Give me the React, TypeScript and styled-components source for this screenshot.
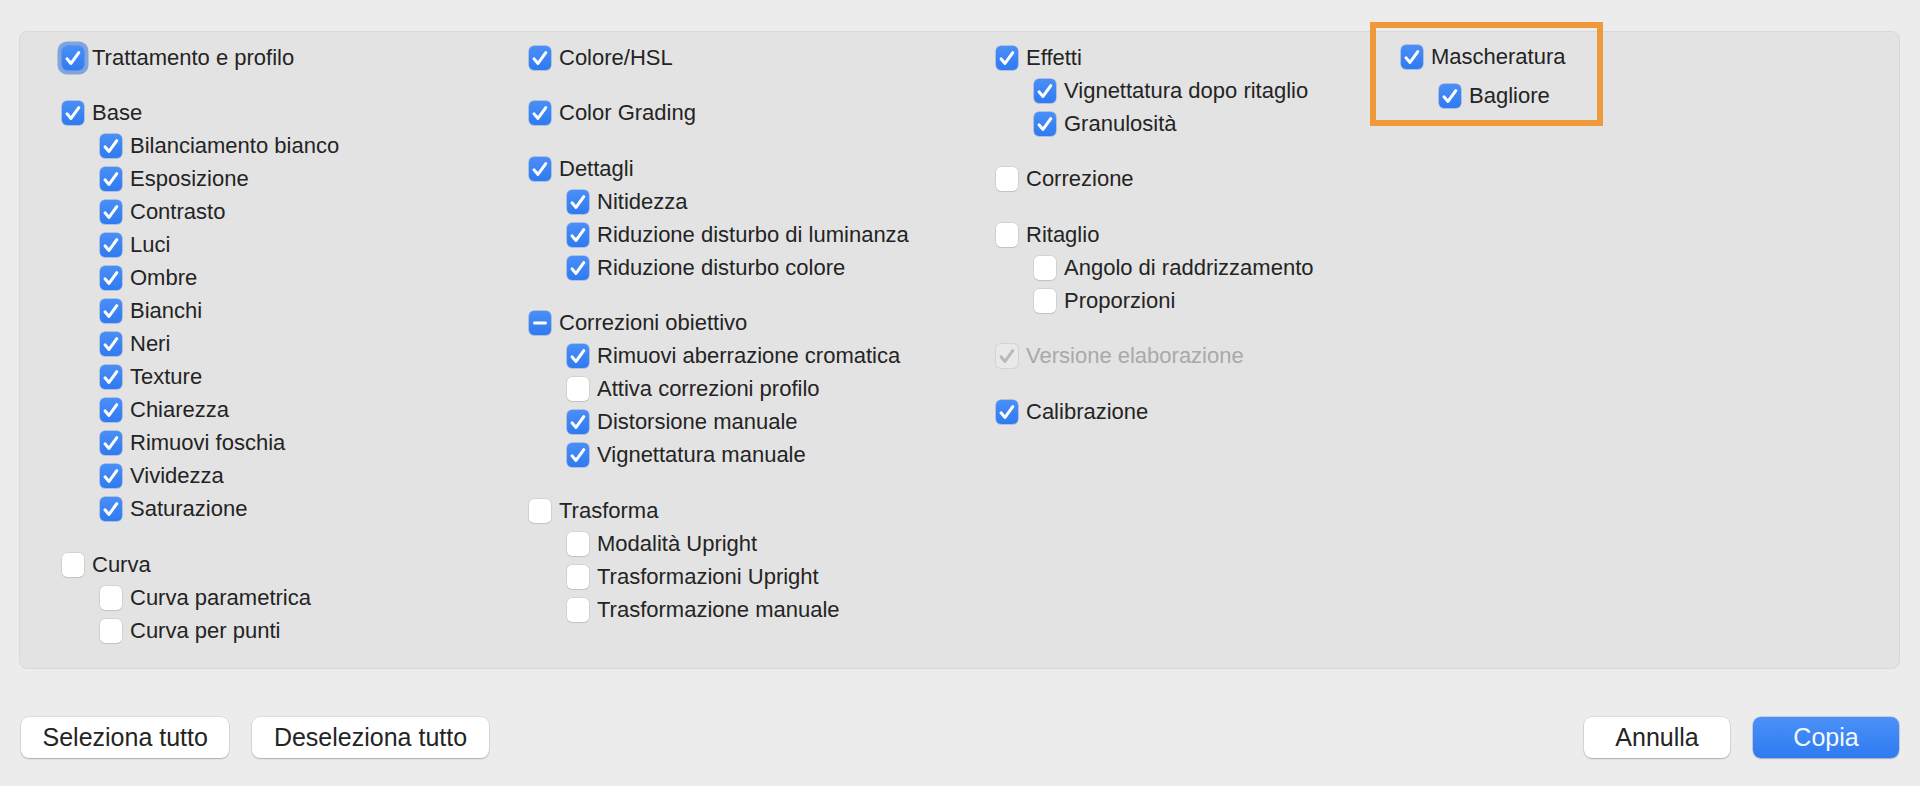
import React from "react";
import styled, { createGlobalStyle, css } from "styled-components";

const GlobalStyle = createGlobalStyle`
  html, body {
    margin: 0;
    padding: 0;
    background: #ececec;
  }
  body {
    font-family: "Liberation Sans", Arial, sans-serif;
    color: #242424;
    -webkit-font-smoothing: antialiased;
  }
`;

type CheckState = "on" | "off" | "mixed" | "disabled";

interface Item {
  label: string;
  state: CheckState;
  focus?: boolean;
  children?: Item[];
}

interface Column {
  width?: number;
  highlight?: boolean;
  groups: Item[];
}

const Page = styled.div`
  width: 1920px;
  height: 786px;
  box-sizing: border-box;
  padding-top: 31px;
  overflow: hidden;
`;

const Panel = styled.div`
  margin: 0 20px 0 19px;
  height: 638px;
  box-sizing: border-box;
  background: #e3e3e3;
  border: 1px solid #d9d9d9;
  border-radius: 8px;
  padding: 9px 0 0 42px;
  display: flex;
  align-items: flex-start;
`;

const Col = styled.div<{ $width?: number }>`
  display: flex;
  flex-direction: column;
  gap: 22.5px;
  ${(p) =>
    p.$width
      ? css`
          width: ${p.$width}px;
          flex: none;
        `
      : css`
          flex: 1;
        `}
`;

const Highlight = styled.div`
  margin: -19px 0 0 -31px;
  width: 233px;
  box-sizing: border-box;
  border: 6px solid #f0993b;
  padding: 12px 0 8px 25px;
`;

const Group = styled.div`
  display: flex;
  flex-direction: column;
`;

const SubList = styled.div<{ $gap?: number }>`
  display: flex;
  flex-direction: column;
  padding-left: 38px;
  margin-top: ${(p) => p.$gap ?? 0}px;
`;

const Row = styled.div<{ $disabled?: boolean }>`
  height: 33px;
  display: flex;
  align-items: center;
  font-size: 22px;
  white-space: nowrap;
  color: ${(p) => (p.$disabled ? "#a9a9a9" : "#242424")};
`;

const Box = styled.span<{ $state: CheckState; $focus?: boolean }>`
  width: 22px;
  height: 24px;
  flex: none;
  border-radius: 5px;
  box-sizing: border-box;
  display: flex;
  align-items: center;
  justify-content: center;
  margin-right: 8px;
  ${(p) =>
    p.$state === "on" || p.$state === "mixed"
      ? css`
          background: linear-gradient(#4a8ff7, #2f7af2);
          box-shadow: 0 0 0 0.5px rgba(30, 90, 200, 0.5);
        `
      : p.$state === "disabled"
      ? css`
          background: #e9e9e9;
          box-shadow: 0 0 0 1px rgba(0, 0, 0, 0.07);
        `
      : css`
          background: #ffffff;
          box-shadow: 0 0 0 0.5px rgba(0, 0, 0, 0.14), 0 1px 1px rgba(0, 0, 0, 0.08);
        `}
  ${(p) =>
    p.$focus &&
    css`
      box-shadow: 0 0 0 0.5px rgba(30, 90, 200, 0.5), 0 0 0 4.5px rgba(92, 140, 222, 0.72);
    `}
`;

const Footer = styled.div`
  margin: 48px 21px 0 21px;
  display: flex;
  align-items: center;
`;

const Spacer = styled.div`
  flex: 1;
`;

const ButtonGroup = styled.div`
  display: flex;
  gap: 23px;
`;

const Button = styled.button<{ $primary?: boolean }>`
  height: 41px;
  min-width: 146px;
  padding: 0 21.5px;
  border: none;
  border-radius: 8px;
  font-family: "Liberation Sans", Arial, sans-serif;
  font-size: 25px;
  line-height: 41px;
  cursor: default;
  ${(p) =>
    p.$primary
      ? css`
          background: linear-gradient(#4b90f7, #2e7bf1);
          color: #f4f8ff;
          box-shadow: 0 0 0 0.5px rgba(30, 90, 200, 0.4), 0 1px 1.5px rgba(0, 0, 0, 0.18);
        `
      : css`
          background: #ffffff;
          color: #242424;
          box-shadow: 0 0 0 0.5px rgba(0, 0, 0, 0.12), 0 1px 1.5px rgba(0, 0, 0, 0.22);
        `}
`;

const CheckIcon: React.FC<{ color: string }> = ({ color }) => (
  <svg width="22" height="24" viewBox="0 0 22 24">
    <path
      d="M5 12.8 L9 17.4 L16.8 6.6"
      fill="none"
      stroke={color}
      strokeWidth="3"
      strokeLinecap="round"
      strokeLinejoin="round"
    />
  </svg>
);

const MixedIcon = () => (
  <svg width="22" height="24" viewBox="0 0 22 24">
    <line x1="5.5" y1="12" x2="16.5" y2="12" stroke="#fff" strokeWidth="3" strokeLinecap="round" />
  </svg>
);

const Checkbox: React.FC<{ state: CheckState; focus?: boolean }> = ({ state, focus }) => (
  <Box $state={state} $focus={focus}>
    {state === "on" && <CheckIcon color="#ffffff" />}
    {state === "disabled" && <CheckIcon color="#b9b9b9" />}
    {state === "mixed" && <MixedIcon />}
  </Box>
);

const CheckRow: React.FC<{ item: Item }> = ({ item }) => (
  <Row $disabled={item.state === "disabled"}>
    <Checkbox state={item.state} focus={item.focus} />
    {item.label}
  </Row>
);

const on = (label: string): Item => ({ label, state: "on" });
const off = (label: string): Item => ({ label, state: "off" });

const columns: Column[] = [
  {
    width: 467,
    groups: [
      { label: "Trattamento e profilo", state: "on", focus: true },
      {
        label: "Base",
        state: "on",
        children: [
          "Bilanciamento bianco",
          "Esposizione",
          "Contrasto",
          "Luci",
          "Ombre",
          "Bianchi",
          "Neri",
          "Texture",
          "Chiarezza",
          "Rimuovi foschia",
          "Vividezza",
          "Saturazione",
        ].map(on),
      },
      {
        label: "Curva",
        state: "off",
        children: ["Curva parametrica", "Curva per punti"].map(off),
      },
    ],
  },
  {
    width: 467,
    groups: [
      on("Colore/HSL"),
      on("Color Grading"),
      {
        label: "Dettagli",
        state: "on",
        children: ["Nitidezza", "Riduzione disturbo di luminanza", "Riduzione disturbo colore"].map(on),
      },
      {
        label: "Correzioni obiettivo",
        state: "mixed",
        children: [
          on("Rimuovi aberrazione cromatica"),
          off("Attiva correzioni profilo"),
          on("Distorsione manuale"),
          on("Vignettatura manuale"),
        ],
      },
      {
        label: "Trasforma",
        state: "off",
        children: ["Modalità Upright", "Trasformazioni Upright", "Trasformazione manuale"].map(off),
      },
    ],
  },
  {
    width: 405,
    groups: [
      {
        label: "Effetti",
        state: "on",
        children: ["Vignettatura dopo ritaglio", "Granulosità"].map(on),
      },
      off("Correzione"),
      {
        label: "Ritaglio",
        state: "off",
        children: ["Angolo di raddrizzamento", "Proporzioni"].map(off),
      },
      { label: "Versione elaborazione", state: "disabled" },
      on("Calibrazione"),
    ],
  },
  {
    highlight: true,
    groups: [
      {
        label: "Mascheratura",
        state: "on",
        children: [on("Bagliore")],
      },
    ],
  },
];

const GroupView: React.FC<{ item: Item; subGap?: number }> = ({ item, subGap }) => (
  <Group>
    <CheckRow item={item} />
    {item.children && (
      <SubList $gap={subGap}>
        {item.children.map((c) => (
          <CheckRow key={c.label} item={c} />
        ))}
      </SubList>
    )}
  </Group>
);

export default function App() {
  return (
    <>
      <GlobalStyle />
      <Page>
        <Panel>
          {columns.map((col, i) => (
            <Col key={i} $width={col.width}>
              {col.highlight ? (
                <Highlight>
                  {col.groups.map((g) => (
                    <GroupView key={g.label} item={g} subGap={6} />
                  ))}
                </Highlight>
              ) : (
                col.groups.map((g) => <GroupView key={g.label} item={g} />)
              )}
            </Col>
          ))}
        </Panel>
        <Footer>
          <ButtonGroup>
            <Button>Seleziona tutto</Button>
            <Button>Deseleziona tutto</Button>
          </ButtonGroup>
          <Spacer />
          <ButtonGroup>
            <Button>Annulla</Button>
            <Button $primary>Copia</Button>
          </ButtonGroup>
        </Footer>
      </Page>
    </>
  );
}
